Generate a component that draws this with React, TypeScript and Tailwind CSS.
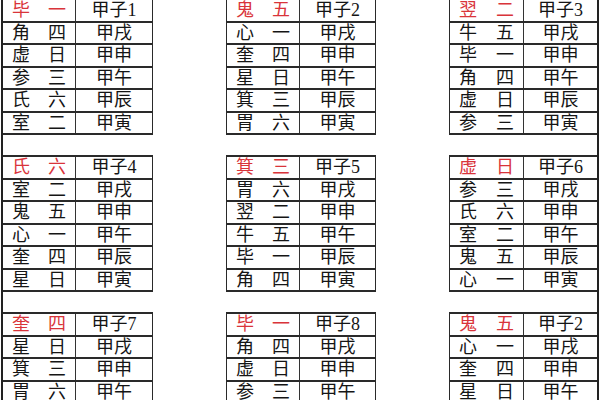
const tables = [
  [
    { head: ["毕", "一", "甲子1"], rows: [["角", "四"], ["虚", "日"], ["参", "三"], ["氏", "六"], ["室", "二"]] },
    { head: ["鬼", "五", "甲子2"], rows: [["心", "一"], ["奎", "四"], ["星", "日"], ["箕", "三"], ["胃", "六"]] },
    { head: ["翌", "二", "甲子3"], rows: [["牛", "五"], ["毕", "一"], ["角", "四"], ["虚", "日"], ["参", "三"]] },
  ],
  [
    { head: ["氏", "六", "甲子4"], rows: [["室", "二"], ["鬼", "五"], ["心", "一"], ["奎", "四"], ["星", "日"]] },
    { head: ["箕", "三", "甲子5"], rows: [["胃", "六"], ["翌", "二"], ["牛", "五"], ["毕", "一"], ["角", "四"]] },
    { head: ["虚", "日", "甲子6"], rows: [["参", "三"], ["氏", "六"], ["室", "二"], ["鬼", "五"], ["心", "一"]] },
  ],
  [
    { head: ["奎", "四", "甲子7"], rows: [["星", "日"], ["箕", "三"], ["胃", "六"], ["翌", "二"], ["牛", "五"]] },
    { head: ["毕", "一", "甲子8"], rows: [["角", "四"], ["虚", "日"], ["参", "三"], ["氏", "六"], ["室", "二"]] },
    { head: ["鬼", "五", "甲子2"], rows: [["心", "一"], ["奎", "四"], ["星", "日"], ["箕", "三"], ["胃", "六"]] },
  ],
]

const days = ["甲戌", "甲申", "甲午", "甲辰", "甲寅"]

type T = { head: string[]; rows: string[][] }

const Table = ({ t, cls, c1 }: { t: T; cls: string; c1: string }) => (
  <div className={`flex flex-col border-t-2 border-[#2a2a2a] ${cls}`}>
    <div className="flex h-[22.5px] border-b-2 border-[#2a2a2a]">
      <div className={`${c1} shrink-0 flex items-center justify-between px-[9px] border-r border-[#333] text-[#d9343a]`}>
        <span>{t.head[0]}</span>
        <span>{t.head[1]}</span>
      </div>
      <div className="flex-1 flex items-center justify-center">{t.head[2]}</div>
    </div>
    {t.rows.map((r, i) => (
      <div key={i} className="flex h-[22.5px] border-b-2 border-[#2a2a2a]">
        <div className={`${c1} shrink-0 flex items-center justify-between px-[9px] border-r border-[#333]`}>
          <span>{r[0]}</span>
          <span>{r[1]}</span>
        </div>
        <div className="flex-1 flex items-center justify-center">{days[i]}</div>
      </div>
    ))}
  </div>
)

export default function App() {
  return (
    <div className="w-[600px] h-[400px] overflow-hidden bg-white">
      <div
        className="ml-[1px] w-[598px] h-full border-x-2 border-[#222] flex flex-col gap-[20px] text-[18px] leading-none text-[#151515]"
        style={{ fontFamily: '"Liberation Serif", "Noto Sans CJK SC", serif' }}
      >
        {tables.map((band, b) => (
          <div key={b} className={`flex shrink-0 ${b === 0 ? "-mt-[2px]" : ""}`}>
            <Table t={band[0]} cls="w-[150px] border-r" c1="w-[73px]" />
            <div className="w-[73px] shrink-0" />
            <Table t={band[1]} cls="w-[150px] border-x" c1="w-[73px]" />
            <div className="w-[73px] shrink-0" />
            <Table t={band[2]} cls="flex-1 border-l" c1="w-[74px]" />
          </div>
        ))}
      </div>
    </div>
  )
}
